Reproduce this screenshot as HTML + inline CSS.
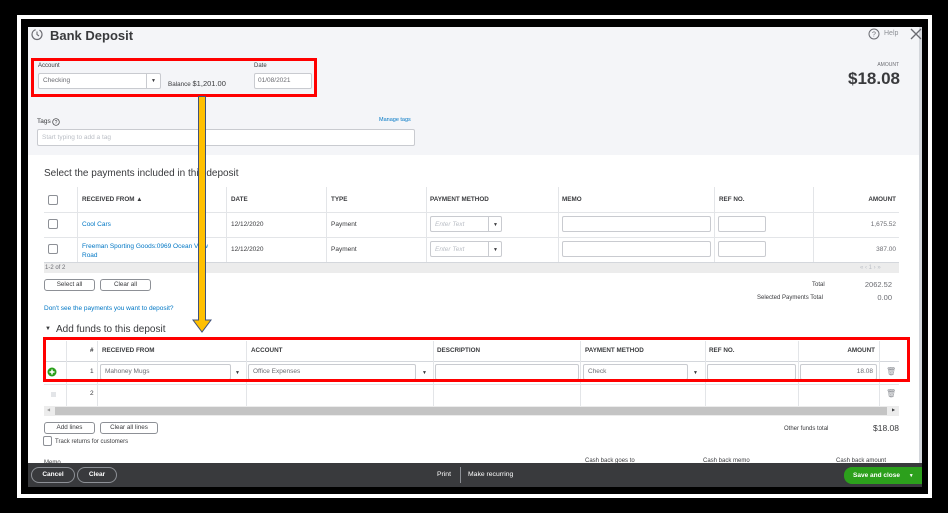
<!DOCTYPE html>
<html><head><meta charset="utf-8"><style>
*{margin:0;padding:0;box-sizing:border-box}
body{width:948px;height:513px;background:#000;position:relative;overflow:hidden;font-family:"Liberation Sans",sans-serif;color:#393a3d}
.a{position:absolute}
.t{position:absolute;font-size:6.5px;white-space:nowrap;line-height:1}
.inp{position:absolute;background:#fff;border:1px solid #c9cbd0;border-radius:2px}
.hd{font-weight:bold;font-size:6.3px;color:#393a3d}
.vl{position:absolute;width:1px;background:#e3e5e8}
.hl{position:absolute;height:1px;background:#e3e5e8}
.btn{position:absolute;background:#fff;border:1px solid #8d9096;border-radius:3px;font-size:6.3px;text-align:center;line-height:10px}
.cb{position:absolute;width:10px;height:10px;border:1px solid #8d9096;border-radius:2px;background:#fff}
.lnk{color:#0077c5}
.dd{position:absolute;font-size:5px;color:#393a3d}
</style></head><body>
<div class="a" style="left:17px;top:15px;width:915px;height:483px;background:#fff"></div>
<div class="a" style="left:21px;top:19px;width:907px;height:475px;background:#000"></div>
<div class="a" style="left:28px;top:27px;width:894px;height:460px;background:#fff"></div>
<div class="a" style="left:28px;top:27px;width:894px;height:128px;background:#f4f5f8"></div>
<div class="a" style="left:919px;top:27px;width:3px;height:436px;background:#d4d7dc"></div>

<!-- header -->
<svg class="a" style="left:30px;top:28px" width="13" height="13" viewBox="0 0 13 13"><circle cx="7" cy="6.5" r="5" fill="none" stroke="#6b6c72" stroke-width="1.2" stroke-dasharray="22 4"/><path d="M7 3.5V6.5L9 8" fill="none" stroke="#6b6c72" stroke-width="1.1"/></svg>
<div class="t" style="left:50px;top:29px;font-size:13px;font-weight:bold;color:#393a3d">Bank Deposit</div>
<svg class="a" style="left:868px;top:28px" width="12" height="12"><circle cx="6" cy="6" r="5" fill="none" stroke="#6b6c72" stroke-width="1"/><text x="6" y="8.5" font-size="7" text-anchor="middle" fill="#6b6c72" font-family="Liberation Sans">?</text></svg>
<div class="t" style="left:884px;top:30px;font-size:7px;color:#8d9096">Help</div>
<svg class="a" style="left:910px;top:28px" width="12" height="12"><path d="M1 1L11 11M11 1L1 11" stroke="#6b6c72" stroke-width="1.3"/></svg>
<div class="t" style="left:860px;top:63px;width:39px;text-align:right;font-size:5px;color:#6b6c72">AMOUNT</div>
<div class="t" style="left:820px;top:70px;width:80px;text-align:right;font-size:17px;font-weight:bold">$18.08</div>

<div class="t" style="left:38px;top:63px;font-size:6px">Account</div>
<div class="inp" style="left:38px;top:73px;width:123px;height:16px"></div>
<div class="a" style="left:146px;top:74px;width:1px;height:14px;background:#c9cbd0"></div>
<div class="t" style="left:43px;top:78px;color:#6b6c72">Checking</div>
<div class="dd" style="left:151px;top:78px">▼</div>
<div class="t" style="left:168px;top:80px;font-size:6.3px">Balance <span style="font-size:7.5px">$1,201.00</span></div>
<div class="t" style="left:254px;top:63px;font-size:6px">Date</div>
<div class="inp" style="left:254px;top:73px;width:58px;height:16px"></div>
<div class="t" style="left:258px;top:78px;color:#6b6c72">01/08/2021</div>
<div class="a" style="left:31px;top:58px;width:286px;height:39px;border:3px solid #ff0000"></div>

<div class="t" style="left:37px;top:119px;font-size:6.5px">Tags</div>
<svg class="a" style="left:52px;top:118px" width="8" height="8"><circle cx="4" cy="4" r="3.3" fill="none" stroke="#393a3d" stroke-width=".7"/><text x="4" y="6" font-size="5" text-anchor="middle" fill="#393a3d">?</text></svg>
<div class="t lnk" style="left:379px;top:118px;font-size:5.5px">Manage tags</div>
<div class="inp" style="left:37px;top:129px;width:378px;height:17px"></div>
<div class="t" style="left:42px;top:135px;color:#babec5">Start typing to add a tag</div>

<!-- payments -->
<div class="t" style="left:44px;top:169px;font-size:10px;color:#393a3d">Select the payments included in this deposit</div>
<div class="hl" style="left:44px;top:212px;width:855px"></div>
<div class="hl" style="left:44px;top:237px;width:855px"></div>
<div class="vl" style="left:77px;top:187px;height:75px"></div>
<div class="vl" style="left:226px;top:187px;height:75px"></div>
<div class="vl" style="left:326px;top:187px;height:75px"></div>
<div class="vl" style="left:426px;top:187px;height:75px"></div>
<div class="vl" style="left:558px;top:187px;height:75px"></div>
<div class="vl" style="left:714px;top:187px;height:75px"></div>
<div class="vl" style="left:813px;top:187px;height:75px"></div>
<div class="cb" style="left:48px;top:195px"></div>
<div class="t hd" style="left:82px;top:197px">RECEIVED FROM ▲</div>
<div class="t hd" style="left:231px;top:197px">DATE</div>
<div class="t hd" style="left:331px;top:197px">TYPE</div>
<div class="t hd" style="left:430px;top:197px">PAYMENT METHOD</div>
<div class="t hd" style="left:562px;top:197px">MEMO</div>
<div class="t hd" style="left:719px;top:197px">REF NO.</div>
<div class="t hd" style="left:850px;top:197px;width:46px;text-align:right">AMOUNT</div>

<div class="cb" style="left:48px;top:219px"></div>
<div class="t lnk" style="left:82px;top:222px">Cool Cars</div>
<div class="t" style="left:231px;top:222px">12/12/2020</div>
<div class="t" style="left:331px;top:222px">Payment</div>
<div class="inp" style="left:430px;top:216px;width:72px;height:16px"></div><div class="a" style="left:488px;top:217px;width:1px;height:14px;background:#c9cbd0"></div>
<div class="t" style="left:435px;top:222px;color:#babec5;font-style:italic">Enter Text</div><div class="dd" style="left:493px;top:222px">▼</div>
<div class="inp" style="left:562px;top:216px;width:149px;height:16px"></div>
<div class="inp" style="left:718px;top:216px;width:48px;height:16px"></div>
<div class="t" style="left:850px;top:222px;width:46px;text-align:right;color:#6b6c72">1,675.52</div>

<div class="cb" style="left:48px;top:244px"></div>
<div class="t lnk" style="left:82px;top:242px;line-height:9px">Freeman Sporting Goods:0969 Ocean View<br>Road</div>
<div class="t" style="left:231px;top:247px">12/12/2020</div>
<div class="t" style="left:331px;top:247px">Payment</div>
<div class="inp" style="left:430px;top:241px;width:72px;height:16px"></div><div class="a" style="left:488px;top:242px;width:1px;height:14px;background:#c9cbd0"></div>
<div class="t" style="left:435px;top:247px;color:#babec5;font-style:italic">Enter Text</div><div class="dd" style="left:493px;top:247px">▼</div>
<div class="inp" style="left:562px;top:241px;width:149px;height:16px"></div>
<div class="inp" style="left:718px;top:241px;width:48px;height:16px"></div>
<div class="t" style="left:850px;top:247px;width:46px;text-align:right;color:#6b6c72">387.00</div>

<div class="a" style="left:44px;top:262px;width:855px;height:11px;background:#ececec;border-top:1px solid #d4d7dc"></div>
<div class="t" style="left:45px;top:265px;font-size:6px;color:#6b6c72">1-2 of 2</div>
<div class="t" style="left:860px;top:265px;font-size:6px;color:#babec5">« ‹ 1 › »</div>
<div class="btn" style="left:44px;top:279px;width:51px;height:12px">Select all</div>
<div class="btn" style="left:100px;top:279px;width:51px;height:12px">Clear all</div>
<div class="t" style="left:812px;top:282px;font-size:6px">Total</div>
<div class="t" style="left:850px;top:281px;width:42px;text-align:right;font-size:7.5px;color:#6b6c72">2062.52</div>
<div class="t" style="left:757px;top:295px;font-size:6px">Selected Payments Total</div>
<div class="t" style="left:850px;top:294px;width:42px;text-align:right;font-size:7.5px;color:#6b6c72">0.00</div>
<div class="t lnk" style="left:44px;top:306px;font-size:6.5px">Don't see the payments you want to deposit?</div>
<div class="t" style="left:45px;top:325px;font-size:10px"><span style="font-size:6px;vertical-align:2px">▼</span>&nbsp; Add funds to this deposit</div>

<!-- add funds table -->
<div class="hl" style="left:44px;top:361px;width:855px;background:#d4d7dc"></div>
<div class="hl" style="left:44px;top:384px;width:855px"></div>
<div class="vl" style="left:66px;top:341px;height:65px"></div>
<div class="vl" style="left:97px;top:341px;height:65px"></div>
<div class="vl" style="left:246px;top:341px;height:65px"></div>
<div class="vl" style="left:433px;top:341px;height:65px"></div>
<div class="vl" style="left:580px;top:341px;height:65px"></div>
<div class="vl" style="left:705px;top:341px;height:65px"></div>
<div class="vl" style="left:798px;top:341px;height:65px"></div>
<div class="vl" style="left:879px;top:341px;height:65px"></div>
<div class="t hd" style="left:90px;top:348px">#</div>
<div class="t hd" style="left:102px;top:348px">RECEIVED FROM</div>
<div class="t hd" style="left:251px;top:348px">ACCOUNT</div>
<div class="t hd" style="left:437px;top:348px">DESCRIPTION</div>
<div class="t hd" style="left:585px;top:348px">PAYMENT METHOD</div>
<div class="t hd" style="left:709px;top:348px">REF NO.</div>
<div class="t hd" style="left:830px;top:348px;width:45px;text-align:right">AMOUNT</div>
<svg class="a" style="left:47px;top:367px" width="10" height="10"><circle cx="5" cy="5" r="4.5" fill="#2ca01c"/><path d="M5 2.5V7.5M2.5 5H7.5" stroke="#fff" stroke-width="1.5"/></svg>
<div class="t" style="left:90px;top:369px">1</div>
<div class="inp" style="left:100px;top:364px;width:131px;height:16px"></div>
<div class="t" style="left:105px;top:369px;color:#6b6c72">Mahoney Mugs</div><div class="dd" style="left:235px;top:370px">▼</div>
<div class="inp" style="left:248px;top:364px;width:168px;height:16px"></div>
<div class="t" style="left:253px;top:369px;color:#6b6c72">Office Expenses</div><div class="dd" style="left:422px;top:370px">▼</div>
<div class="inp" style="left:435px;top:364px;width:144px;height:16px"></div>
<div class="inp" style="left:583px;top:364px;width:105px;height:16px"></div>
<div class="t" style="left:588px;top:369px;color:#6b6c72">Check</div><div class="dd" style="left:693px;top:370px">▼</div>
<div class="inp" style="left:707px;top:364px;width:89px;height:16px"></div>
<div class="inp" style="left:800px;top:364px;width:77px;height:16px"></div>
<div class="t" style="left:830px;top:369px;width:43px;text-align:right;color:#6b6c72">18.08</div>
<div class="t" style="left:886px;top:368px;font-size:8px;color:#8d9096">🗑</div>
<div class="a" style="left:51px;top:392px;width:5px;height:5px;background:#e3e5e8"></div>
<div class="t" style="left:90px;top:391px">2</div>
<div class="t" style="left:886px;top:390px;font-size:8px;color:#8d9096">🗑</div>
<div class="a" style="left:43px;top:337px;width:867px;height:45px;border:3px solid #ff0000"></div>
<div class="a" style="left:44px;top:406px;width:855px;height:10px;background:#ececec"></div>
<div class="a" style="left:55px;top:407px;width:832px;height:8px;background:#c4c4c4"></div>
<div class="t" style="left:47px;top:408px;font-size:4px;color:#999">◀</div>
<div class="t" style="left:892px;top:408px;font-size:4px;color:#393a3d">▶</div>
<div class="btn" style="left:44px;top:422px;width:51px;height:12px">Add lines</div>
<div class="btn" style="left:100px;top:422px;width:58px;height:12px">Clear all lines</div>
<div class="cb" style="left:43px;top:436px;width:9px;height:10px"></div>
<div class="t" style="left:55px;top:439px;font-size:6px">Track returns for customers</div>
<div class="t" style="left:784px;top:426px;font-size:6px">Other funds total</div>
<div class="t" style="left:850px;top:424px;width:49px;text-align:right;font-size:8.5px">$18.08</div>
<div class="t" style="left:44px;top:460px;font-size:6px">Memo</div>
<div class="t" style="left:585px;top:458px;font-size:6px">Cash back goes to</div>
<div class="t" style="left:703px;top:458px;font-size:6px">Cash back memo</div>
<div class="t" style="left:836px;top:458px;font-size:6px">Cash back amount</div>

<!-- footer -->
<div class="a" style="left:28px;top:463px;width:894px;height:24px;background:#393a3d"></div>
<div class="a" style="left:31px;top:467px;width:44px;height:16px;border:1px solid #8d9096;border-radius:8px;color:#fff;font-size:6.5px;font-weight:bold;text-align:center;line-height:14px">Cancel</div>
<div class="a" style="left:77px;top:467px;width:40px;height:16px;border:1px solid #8d9096;border-radius:8px;color:#fff;font-size:6.5px;font-weight:bold;text-align:center;line-height:14px">Clear</div>
<div class="t" style="left:437px;top:472px;color:#fff;font-size:6.8px">Print</div>
<div class="a" style="left:460px;top:467px;width:1px;height:16px;background:#8d9096"></div>
<div class="t" style="left:468px;top:472px;color:#fff;font-size:6.8px">Make recurring</div>
<div class="a" style="left:844px;top:467px;width:78px;height:17px;background:#2ca01c;border-radius:8px 0 0 8px;color:#fff;font-size:6.5px;font-weight:bold;line-height:17px;padding-left:9px">Save and close <span style="margin-left:7px;font-size:5px">▼</span></div>

<!-- arrow -->
<svg class="a" style="left:190px;top:96px" width="24" height="240"><path d="M8.5 0.5H15.5V224H21L12 236L3 224H8.5Z" fill="#ffc000" stroke="#41527a" stroke-width="1"/></svg>
</body></html>
